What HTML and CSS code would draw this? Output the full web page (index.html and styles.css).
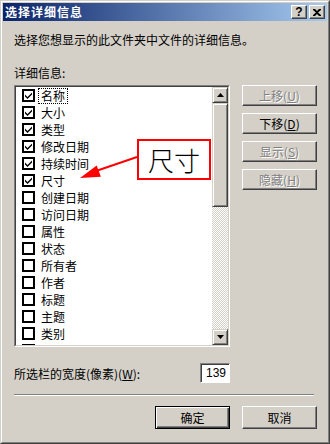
FILE: index.html
```html
<!DOCTYPE html>
<html>
<head>
<meta charset="utf-8">
<link rel="stylesheet" href="styles.css">
</head>
<body>
<div class="window">
  <div class="frame">
    <div class="titlebar">
      <span class="title">选择详细信息</span>
      <div class="tb-btns">
        <div class="tb-btn help">?</div>
        <div class="tb-btn">
          <svg width="8" height="7" viewBox="0 0 8 7"><path d="M0 0h2l2 2 2-2h2v1L5 3.5 8 6v1H6L4 5 2 7H0V6l3-2.5L0 1z" fill="#000"/></svg>
        </div>
      </div>
    </div>
    <div class="content">
      <p class="desc">选择您想显示的此文件夹中文件的详细信息。</p>
      <p class="label">详细信息:</p>
      <div class="main">
        <div class="listbox">
          <div class="list-inner">
            <ul class="items">
              <li class="item"><span class="cb on"></span><span class="txt focus">名称</span></li>
              <li class="item"><span class="cb on"></span><span class="txt">大小</span></li>
              <li class="item"><span class="cb on"></span><span class="txt">类型</span></li>
              <li class="item"><span class="cb on"></span><span class="txt">修改日期</span></li>
              <li class="item"><span class="cb on"></span><span class="txt">持续时间</span></li>
              <li class="item"><span class="cb on"></span><span class="txt">尺寸</span></li>
              <li class="item"><span class="cb"></span><span class="txt">创建日期</span></li>
              <li class="item"><span class="cb"></span><span class="txt">访问日期</span></li>
              <li class="item"><span class="cb"></span><span class="txt">属性</span></li>
              <li class="item"><span class="cb"></span><span class="txt">状态</span></li>
              <li class="item"><span class="cb"></span><span class="txt">所有者</span></li>
              <li class="item"><span class="cb"></span><span class="txt">作者</span></li>
              <li class="item"><span class="cb"></span><span class="txt">标题</span></li>
              <li class="item"><span class="cb"></span><span class="txt">主题</span></li>
              <li class="item"><span class="cb"></span><span class="txt">类别</span></li>
              <li class="item"><span class="cb"></span><span class="txt">页数</span></li>
            </ul>
            <div class="scrollbar">
              <div class="sb-btn"><svg width="7" height="4" viewBox="0 0 7 4"><path d="M3.5 0L7 4H0z" fill="#000"/></svg></div>
              <div class="sb-thumb"></div>
              <div class="sb-track"></div>
              <div class="sb-btn"><svg width="7" height="4" viewBox="0 0 7 4"><path d="M0 0h7L3.5 4z" fill="#000"/></svg></div>
            </div>
          </div>
        </div>
        <div class="side-btns">
          <div class="btn disabled">上移(<u>U</u>)</div>
          <div class="btn">下移(<u>D</u>)</div>
          <div class="btn disabled">显示(<u>S</u>)</div>
          <div class="btn disabled">隐藏(<u>H</u>)</div>
        </div>
      </div>
      <div class="width-row">
        <span>所选栏的宽度(像素)(<u>W</u>):</span>
        <div class="field">139</div>
      </div>
      <div class="sep"></div>
      <div class="footer">
        <div class="btn default">确定</div>
        <div class="btn">取消</div>
      </div>
    </div>
  </div>
  <div class="callout">尺寸</div>
  <svg class="arrow" width="64" height="34" viewBox="0 0 64 34">
    <line x1="61" y1="7" x2="20" y2="21" stroke="#f00" stroke-width="2"/>
    <path d="M4 28L20.7 15.5 24.9 26.7z" fill="#f00"/>
  </svg>
</div>
</body>
</html>
```
FILE: styles.css
```css
* { box-sizing: border-box; margin: 0; padding: 0; }
body {
  margin: 0;
  width: 330px;
  height: 444px;
  font-family: "Noto Sans CJK SC", "Liberation Sans", sans-serif;
  font-size: 12px;
  color: #000;
  background: #d4d0c8;
  overflow: hidden;
}
.window {
  position: relative;
  width: 330px;
  height: 444px;
  border: 1px solid;
  border-color: #d4d0c8 #404040 #404040 #d4d0c8;
  background: #d4d0c8;
}
.frame {
  height: 100%;
  border: 1px solid;
  border-color: #fff #808080 #808080 #fff;
  padding: 1px;
  display: flex;
  flex-direction: column;
}
.titlebar {
  height: 18px;
  background: linear-gradient(to right, #0a246a, #a6caf0);
  display: flex;
  align-items: center;
  justify-content: space-between;
  padding: 0 2px;
}
.title {
  color: #fff;
  font-weight: bold;
  font-size: 12px;
  letter-spacing: 1px;
  line-height: 18px;
}
.tb-btns { display: flex; gap: 2px; }
.tb-btn {
  width: 16px;
  height: 14px;
  background: #d4d0c8;
  border: 1px solid;
  border-color: #fff #404040 #404040 #fff;
  box-shadow: inset -1px -1px #808080;
  display: flex;
  align-items: center;
  justify-content: center;
}
.tb-btn.help {
  font-family: "Liberation Sans", sans-serif;
  font-weight: bold;
  font-size: 12px;
  line-height: 12px;
}
.content {
  flex: 1;
  padding: 0 9px 0 11px;
  display: flex;
  flex-direction: column;
}
.desc { margin-top: 12px; line-height: 14px; }
.label { margin-top: 19px; line-height: 14px; }
.main {
  margin-top: 5px;
  display: flex;
  gap: 12px;
  height: 262px;
}
.listbox {
  width: 216px;
  height: 262px;
  border: 1px solid;
  border-color: #808080 #fff #fff #808080;
}
.list-inner {
  height: 100%;
  border: 1px solid;
  border-color: #404040 #d4d0c8 #d4d0c8 #404040;
  background: #fff;
  display: flex;
}
.items {
  flex: 1;
  list-style: none;
  overflow: hidden;
}
.item {
  height: 17px;
  display: flex;
  align-items: center;
  padding-left: 6px;
}
.cb {
  width: 13px;
  height: 13px;
  border: 2px solid #000;
  background: #fff;
  flex: none;
}
.cb.on {
  background: #fff url("data:image/svg+xml;utf8,<svg xmlns='http://www.w3.org/2000/svg' width='9' height='9'><path d='M1 3.5l2.5 2.5 4.5-4.5v2L3.5 8 1 5.5z' fill='black'/></svg>") center/9px 9px no-repeat;
}
.txt {
  margin-left: 3px;
  padding: 0 2px;
  border: 1px dotted transparent;
  line-height: 14px;
}
.txt.focus { border-color: #000; }
.scrollbar {
  width: 16px;
  display: flex;
  flex-direction: column;
}
.sb-btn, .sb-thumb {
  background: #d4d0c8;
  border: 1px solid;
  border-color: #d4d0c8 #404040 #404040 #d4d0c8;
  box-shadow: inset 1px 1px #fff, inset -1px -1px #808080;
}
.sb-btn {
  height: 16px;
  display: flex;
  align-items: center;
  justify-content: center;
}
.sb-thumb { height: 104px; }
.sb-track {
  flex: 1;
  background: repeating-conic-gradient(#fff 0 25%, #d4d0c8 0 50%) 0 0 / 2px 2px;
}
.side-btns {
  display: flex;
  flex-direction: column;
  gap: 7px;
}
.btn {
  width: 75px;
  height: 21px;
  background: #d4d0c8;
  border: 1px solid;
  border-color: #fff #404040 #404040 #fff;
  box-shadow: inset -1px -1px #808080;
  display: flex;
  align-items: center;
  justify-content: center;
  line-height: 14px;
}
.btn u { text-decoration: underline; }
.btn.disabled {
  color: #808080;
  text-shadow: 1px 1px #fff;
}
.width-row {
  margin-top: 16px;
  width: 216px;
  height: 20px;
  display: flex;
  align-items: center;
  justify-content: space-between;
}
.field {
  width: 30px;
  height: 20px;
  background: #fff;
  border: 1px solid;
  border-color: #808080 #fff #fff #808080;
  box-shadow: inset 1px 1px #404040;
  text-align: right;
  padding-right: 3px;
  line-height: 18px;
  font-family: "Liberation Sans", sans-serif;
}
.sep {
  margin-top: 11px;
  width: 300px;
  height: 2px;
  border-top: 1px solid #808080;
  border-bottom: 1px solid #fff;
}
.footer {
  margin-top: 10px;
  display: flex;
  justify-content: flex-end;
  gap: 12px;
  padding-right: 1px;
}
.footer .btn { height: 23px; }
.btn.default {
  border: 1px solid #000;
  box-shadow: inset 1px 1px #fff, inset -1px -1px #404040, inset -2px -2px #808080;
}
.callout {
  position: absolute;
  left: 136px;
  top: 138px;
  width: 74px;
  height: 41px;
  border: 2px solid #f00;
  background: #fff;
  font-size: 26px;
  font-weight: 300;
  line-height: 37px;
  text-align: center;
}
.arrow {
  position: absolute;
  left: 75px;
  top: 149px;
}
```
